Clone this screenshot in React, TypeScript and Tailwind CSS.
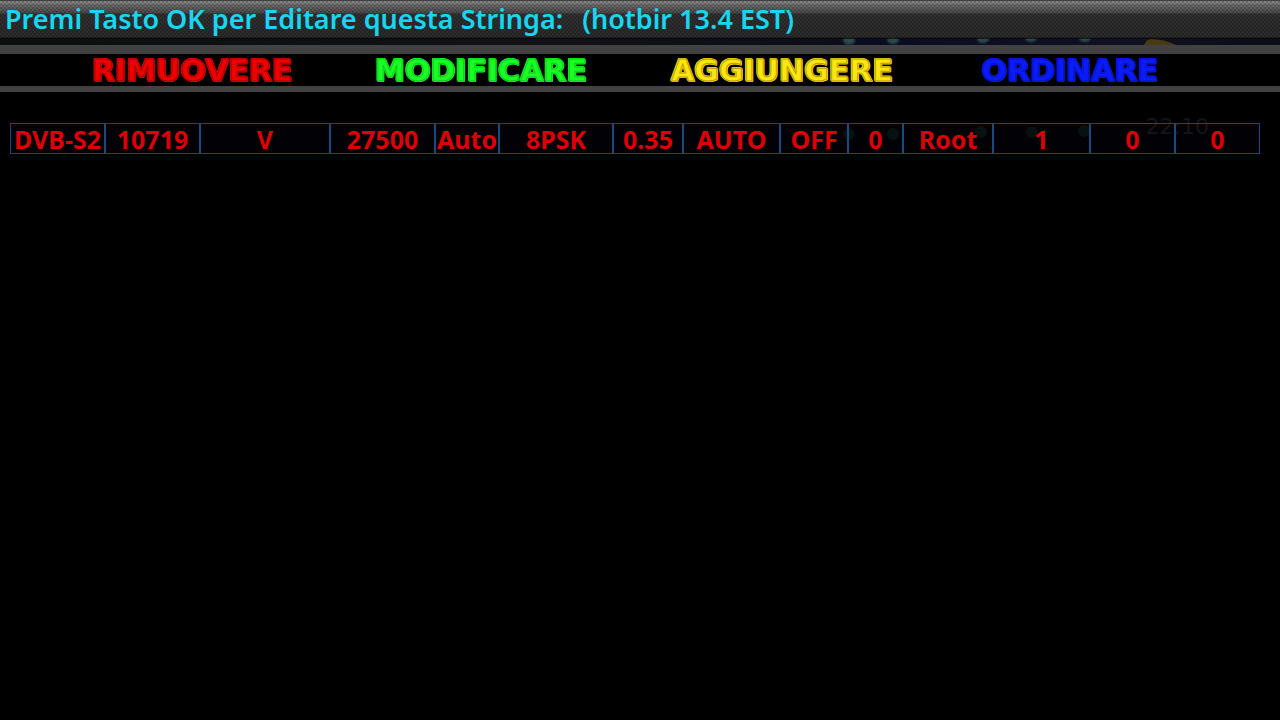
const actions = [
  { label: "RIMUOVERE", tone: "text-[#f00000] [-webkit-text-stroke:1px_#a80000] [text-shadow:1px_0_#e60000,-1px_0_#e60000,0_1px_#e60000,0_-1px_#e60000,1px_1px_#e60000,-1px_-1px_#e60000]" },
  { label: "MODIFICARE", tone: "text-[#19ff26] [-webkit-text-stroke:1px_#0fcc1c] [text-shadow:1px_0_#19ff26,-1px_0_#19ff26,0_1px_#19ff26,0_-1px_#19ff26,1px_1px_#19ff26,-1px_-1px_#19ff26]" },
  { label: "AGGIUNGERE", tone: "text-[#ffe611] [-webkit-text-stroke:1px_#b89d00] [text-shadow:1px_0_#ffe011,-1px_0_#ffe011,0_1px_#ffe011,0_-1px_#ffe011,1px_1px_#ffe011,-1px_-1px_#ffe011]" },
  { label: "ORDINARE", tone: "text-[#0a1cff] [-webkit-text-stroke:1px_#0712c0] [text-shadow:1px_0_#0a1cff,-1px_0_#0a1cff,0_1px_#0a1cff,0_-1px_#0a1cff,1px_1px_#0a1cff,-1px_-1px_#0a1cff]" },
];

const columns = [
  { value: "DVB-S2", width: "w-[95px]" },
  { value: "10719", width: "w-[95px]" },
  { value: "V", width: "w-[130px]" },
  { value: "27500", width: "w-[105px]" },
  { value: "Auto", width: "w-[64px]" },
  { value: "8PSK", width: "w-[114px]" },
  { value: "0.35", width: "w-[70px]" },
  { value: "AUTO", width: "w-[97px]" },
  { value: "OFF", width: "w-[68px]" },
  { value: "0", width: "w-[55px]" },
  { value: "Root", width: "w-[90px]" },
  { value: "1", width: "w-[97px]" },
  { value: "0", width: "w-[85px]" },
  { value: "0", width: "w-[83px]" },
];

function Glow() {
  return (
    <svg className="block h-[7px] w-full" viewBox="0 0 1280 7" preserveAspectRatio="none" aria-hidden="true">
      <defs>
        <linearGradient id="haze" x1="0" x2="1">
          <stop offset="0" stopColor="#0b100e" />
          <stop offset="0.4" stopColor="#111116" />
          <stop offset="0.65" stopColor="#0e0e18" />
          <stop offset="0.67" stopColor="#0b0b24" />
          <stop offset="0.88" stopColor="#101024" />
          <stop offset="1" stopColor="#0d0d16" />
        </linearGradient>
        <filter id="soft" x="-20%" y="-50%" width="140%" height="200%">
          <feGaussianBlur stdDeviation="1" />
        </filter>
      </defs>
      <rect width="1280" height="7" fill="url(#haze)" />
      <g fill="#2b4a4a" filter="url(#soft)">
        <ellipse cx="849" cy="2" rx="6" ry="5" />
        <ellipse cx="893" cy="2" rx="6" ry="4" />
        <ellipse cx="983" cy="1" rx="6" ry="4" />
        <ellipse cx="1031" cy="0" rx="6" ry="4" />
        <ellipse cx="1085" cy="0" rx="6" ry="4" />
      </g>
      <path d="M1144 7Q1146 1 1151 1Q1164 1 1176 7Z" fill="#493914" />
      <rect width="1280" height="1" fill="#030303" opacity="0.6" />
    </svg>
  );
}

function Ghost() {
  return (
    <div className="pointer-events-none absolute inset-0" aria-hidden="true">
      <svg className="h-full w-full" viewBox="0 0 1250 31" preserveAspectRatio="none">
        <g fill="#07110f">
          <circle cx="839" cy="11" r="6" />
          <circle cx="883" cy="11" r="6" />
          <circle cx="971" cy="9" r="6" />
          <circle cx="1022" cy="9" r="6" />
          <circle cx="1074" cy="8" r="6" />
        </g>
      </svg>
      <span className="absolute -top-2 right-[51px] font-['DejaVu_Sans',sans-serif] text-[22px] leading-6 text-[#151516]">
        22:10
      </span>
    </div>
  );
}

export default function App() {
  return (
    <main className="min-h-screen bg-black font-['Noto_Sans',sans-serif]">
      <header className="flex h-[38px] items-start gap-[19px] border-t border-[#414141] bg-[repeating-conic-gradient(rgba(0,0,0,.2)_0_25%,transparent_0_50%),linear-gradient(to_bottom,#777_0,#8a8a8a_2px,#707070_3px,#494949_12px,#303030_13px,#2b2b2b_36px,#151515_37px)] bg-[length:4px_4px,100%_100%] px-[5px] text-[27px] leading-9 font-semibold whitespace-nowrap text-[#19d5f2]">
        <h1>Premi Tasto OK per Editare questa Stringa:</h1>
        <span>(hotbir 13.4 EST)</span>
      </header>
      <Glow />
      <nav className="grid grid-cols-[290fr_288fr_314fr_262fr] border-t-[9px] border-b-[6px] border-[#424242] pr-[79px] pl-[47px]">
        {actions.map((action) => (
          <button
            key={action.label}
            type="button"
            className={`flex h-8 items-start justify-center font-['DejaVu_Sans',sans-serif] text-[30px] leading-[34px] font-bold [stroke-linejoin:round] ${action.tone}`}
          >
            {action.label}
          </button>
        ))}
      </nav>
      <section className="mt-[31px] mr-5 ml-[10px]">
        <div className="relative bg-[#020206]">
          <Ghost />
          <table className="relative w-full table-fixed border-separate border-spacing-0 border border-[#174a82]">
            <tbody>
              <tr>
                {columns.map((column, index) => (
                  <td
                    key={index}
                    className={`border-r-2 border-[#174a82] p-0 pt-px text-center text-[25px] leading-7 font-bold whitespace-nowrap text-[#dc0008] last:border-r-0 ${column.width}`}
                  >
                    {column.value}
                  </td>
                ))}
              </tr>
            </tbody>
          </table>
        </div>
      </section>
    </main>
  );
}
